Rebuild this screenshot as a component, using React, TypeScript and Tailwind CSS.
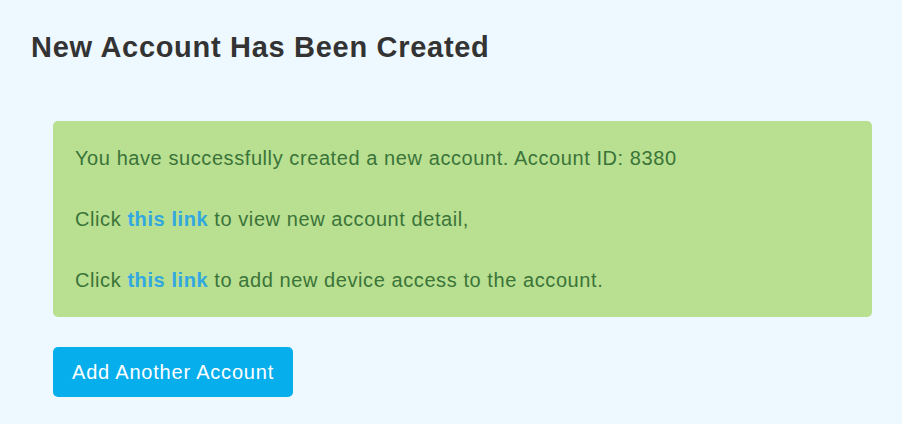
export default function App() {
  return (
    <div className="min-h-screen bg-[#eef9ff] font-['Liberation_Sans',Arial,sans-serif]">
      <div className="px-[31px] pt-[30px]">
        <h1 className="text-[29px] leading-[34px] font-bold tracking-[0.7px] text-[#333333]">New Account Has Been Created</h1>
      </div>
      <div className="px-[53px] pt-[57px] w-[925px]">
        <div className="rounded-[5px] bg-[#b9df90] px-[22px] py-6 text-[20px] leading-[26px] tracking-[0.58px] text-[#3a7439]">
          <p>You have successfully created a new account. Account ID: 8380</p>
          <p className="mt-[35px]">
            Click <a href="#" className="font-bold text-[#31a8e0]">this link</a> to view new account detail,
          </p>
          <p className="mt-[35px]">
            Click <a href="#" className="font-bold text-[#31a8e0]">this link</a> to add new device access to the account.
          </p>
        </div>
        <button className="mt-[30px] h-[50px] rounded-[5px] bg-[#07aeec] px-[19px] text-[20px] tracking-[0.8px] text-white">
          Add Another Account
        </button>
      </div>
    </div>
  );
}
